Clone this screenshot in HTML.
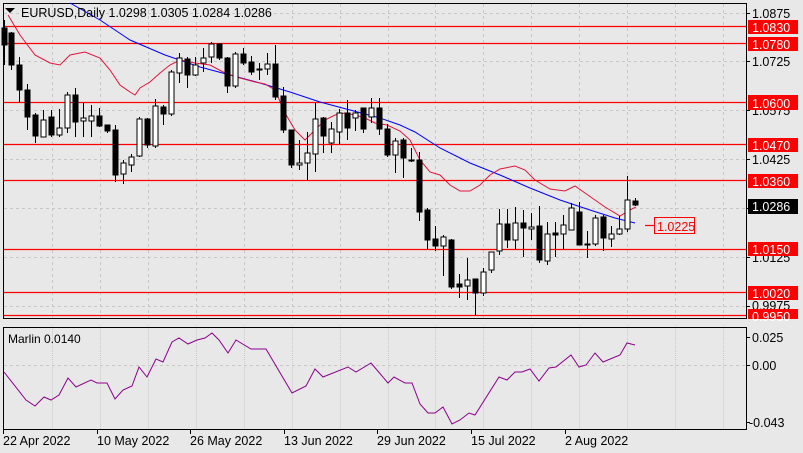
<!DOCTYPE html><html><head><style>body{margin:0;background:#e8e8e8;width:803px;height:453px;overflow:hidden}svg{display:block;font-family:"Liberation Sans",sans-serif}</style></head><body>
<svg width="803" height="453" viewBox="0 0 803 453">
<rect width="803" height="453" fill="#e8e8e8"/>
<g stroke="#c8c8c8" stroke-dasharray="3,3" stroke-width="1">
<line x1="4" x2="746" y1="13.5" y2="13.5"/><line x1="4" x2="746" y1="61.5" y2="61.5"/><line x1="4" x2="746" y1="110.5" y2="110.5"/><line x1="4" x2="746" y1="159.5" y2="159.5"/><line x1="4" x2="746" y1="208.5" y2="208.5"/><line x1="4" x2="746" y1="257.5" y2="257.5"/><line x1="4" x2="746" y1="306.5" y2="306.5"/>
<line x1="4" x2="746" y1="365.5" y2="365.5"/>
<g id="vg"><line x1="52.5" x2="52.5" y1="4" y2="318"/><line x1="100.5" x2="100.5" y1="4" y2="318"/><line x1="148.5" x2="148.5" y1="4" y2="318"/><line x1="196.5" x2="196.5" y1="4" y2="318"/><line x1="244.5" x2="244.5" y1="4" y2="318"/><line x1="292.5" x2="292.5" y1="4" y2="318"/><line x1="340.5" x2="340.5" y1="4" y2="318"/><line x1="388.5" x2="388.5" y1="4" y2="318"/><line x1="435.5" x2="435.5" y1="4" y2="318"/><line x1="483.5" x2="483.5" y1="4" y2="318"/><line x1="531.5" x2="531.5" y1="4" y2="318"/><line x1="579.5" x2="579.5" y1="4" y2="318"/><line x1="627.5" x2="627.5" y1="4" y2="318"/><line x1="675.5" x2="675.5" y1="4" y2="318"/><line x1="723.5" x2="723.5" y1="4" y2="318"/></g>
<use href="#vg" transform="translate(0,324) scale(1,0.33)"/>
</g>
<g stroke="#000" fill="none" stroke-width="1">
<rect x="3.5" y="3.5" width="743" height="315"/>
<rect x="3.5" y="327.5" width="743" height="102"/>
</g>
<g stroke="#f00" stroke-width="1.2">
<line x1="4" x2="746" y1="26.5" y2="26.5"/><line x1="4" x2="746" y1="43.5" y2="43.5"/><line x1="4" x2="746" y1="102.5" y2="102.5"/><line x1="4" x2="746" y1="144.5" y2="144.5"/><line x1="4" x2="746" y1="180.5" y2="180.5"/><line x1="4" x2="746" y1="249.5" y2="249.5"/><line x1="4" x2="746" y1="292.5" y2="292.5"/><line x1="4" x2="746" y1="315.5" y2="315.5"/>
<line x1="645" x2="654" y1="225.5" y2="225.5"/>
</g>
<polyline fill="none" stroke="#00f" stroke-width="1" points="70,3 100,20 130,40 165,55 200,67 230,75 260,83 290,92 320,102 350,110 380,118 400,125 415,132 440,148 470,163 500,175 530,188 560,200 590,210 615,218 635,223"/>
<polyline fill="none" stroke="#e0143c" stroke-width="1" points="8,15 20,35 35,55 50,63 60,65 70,55 85,52 100,58 110,70 120,85 130,92 135,95 140,88 150,82 160,73 170,65 180,60 195,63 210,65 225,73 240,78 255,82 265,84 275,90 285,113 295,130 305,140 315,130 325,120 335,115 345,113 355,115 365,118 375,123 387,125 400,131 410,140 420,160 430,172 440,175 450,185 460,191 470,191 480,185 490,175 500,169 515,166 525,170 535,180 550,189 565,191 575,186 585,193 595,200 605,207 620,216 630,210 636,207"/>
<g stroke="#000" stroke-width="1">
<path d="M4.5 20V65M11.5 32V70M19.5 57V103M27.5 84V130M35.5 113V143M43.5 110V137M51.5 110V137M59.5 109V137M67.5 92V133M75.5 88V137M83.5 103V137M91.5 105V137M99.5 108V127M107.5 125V133M115.5 125V182M123.5 160V184M131.5 154V172M139.5 117V157M147.5 118V148M155.5 99V148M163.5 105V125M171.5 70V116M179.5 53V83M187.5 57V88M195.5 57V76M203.5 48V72M211.5 42V63M219.5 43V60M227.5 57V93M235.5 52V88M243.5 48V65M251.5 56V75M259.5 63V80M267.5 53V75M275.5 45V100M283.5 87V133M291.5 136V168M299.5 140V170M307.5 132V180M315.5 102V172M323.5 117V153M331.5 122V153M339.5 109V145M347.5 100V140M355.5 110V131M363.5 108V133M371.5 98V123M379.5 98V135M387.5 124V157M395.5 138V173M403.5 138V178M411.5 148V162M419.5 152V221M427.5 208V250M435.5 226V251M443.5 235V276M451.5 239V289M459.5 274V298M467.5 258V300M475.5 279V315M483.5 268V296M491.5 252V273M499.5 209V255M507.5 209V248M515.5 207V249M523.5 210V257M531.5 213V240M539.5 206V263M547.5 222V265M555.5 222V257M563.5 215V249M571.5 203V230M579.5 202V244M587.5 231V258M595.5 215V246M603.5 215V251M611.5 226V247M619.5 216V235M627.5 176V232M635.5 198V206"/>
</g>
<g stroke="#000" stroke-width="1">
<g fill="#000"><rect x="2" y="28" width="5" height="17"/><rect x="9" y="33" width="5" height="32"/><rect x="17" y="65" width="5" height="25"/><rect x="25" y="90" width="5" height="27"/><rect x="33" y="115" width="5" height="21"/><rect x="49" y="117" width="5" height="18"/><rect x="73" y="95" width="5" height="27"/><rect x="97" y="116" width="5" height="10"/><rect x="105" y="125" width="5" height="6"/><rect x="113" y="130" width="5" height="45"/><rect x="145" y="119" width="5" height="26"/><rect x="161" y="107" width="5" height="7"/><rect x="185" y="59" width="5" height="16"/><rect x="217" y="44" width="5" height="14"/><rect x="225" y="58" width="5" height="28"/><rect x="241" y="54" width="5" height="9"/><rect x="249" y="62" width="5" height="10"/><rect x="257" y="69" width="5" height="1"/><rect x="273" y="64" width="5" height="33"/><rect x="281" y="96" width="5" height="34"/><rect x="289" y="130" width="5" height="35"/><rect x="321" y="118" width="5" height="18"/><rect x="345" y="113" width="5" height="15"/><rect x="361" y="108" width="5" height="21"/><rect x="377" y="108" width="5" height="21"/><rect x="385" y="129" width="5" height="26"/><rect x="401" y="140" width="5" height="18"/><rect x="409" y="160" width="5" height="1"/><rect x="417" y="160" width="5" height="52"/><rect x="425" y="210" width="5" height="30"/><rect x="433" y="239" width="5" height="7"/><rect x="449" y="240" width="5" height="47"/><rect x="457" y="284" width="5" height="3"/><rect x="473" y="279" width="5" height="14"/><rect x="505" y="224" width="5" height="16"/><rect x="521" y="223" width="5" height="5"/><rect x="537" y="226" width="5" height="34"/><rect x="553" y="233" width="5" height="2"/><rect x="577" y="212" width="5" height="33"/><rect x="585" y="244" width="5" height="1"/><rect x="601" y="217" width="5" height="21"/><rect x="633" y="201" width="5" height="4"/></g>
<g fill="#fff"><rect x="41" y="120" width="5" height="17"/><rect x="57" y="128" width="5" height="7"/><rect x="65" y="95" width="5" height="33"/><rect x="81" y="118" width="5" height="3"/><rect x="89" y="116" width="5" height="5"/><rect x="121" y="163" width="5" height="11"/><rect x="129" y="157" width="5" height="8"/><rect x="137" y="119" width="5" height="37"/><rect x="153" y="106" width="5" height="40"/><rect x="169" y="72" width="5" height="42"/><rect x="177" y="58" width="5" height="15"/><rect x="193" y="65" width="5" height="10"/><rect x="201" y="58" width="5" height="5"/><rect x="209" y="44" width="5" height="13"/><rect x="233" y="54" width="5" height="32"/><rect x="265" y="64" width="5" height="5"/><rect x="297" y="163" width="5" height="2"/><rect x="305" y="153" width="5" height="10"/><rect x="313" y="119" width="5" height="35"/><rect x="329" y="129" width="5" height="14"/><rect x="337" y="113" width="5" height="19"/><rect x="353" y="113" width="5" height="5"/><rect x="369" y="108" width="5" height="9"/><rect x="393" y="141" width="5" height="14"/><rect x="441" y="237" width="5" height="9"/><rect x="465" y="280" width="5" height="6"/><rect x="481" y="272" width="5" height="21"/><rect x="489" y="252" width="5" height="18"/><rect x="497" y="224" width="5" height="27"/><rect x="513" y="223" width="5" height="17"/><rect x="529" y="227" width="5" height="2"/><rect x="545" y="234" width="5" height="27"/><rect x="561" y="225" width="5" height="9"/><rect x="569" y="208" width="5" height="22"/><rect x="593" y="218" width="5" height="26"/><rect x="609" y="234" width="5" height="5"/><rect x="617" y="229" width="5" height="5"/><rect x="625" y="200" width="5" height="29"/></g>
</g>
<polyline fill="none" stroke="#8b008b" stroke-width="1" points="4,372 26,400 35,406 44,397 51,400 59,395 68,378 76,387 91,380 97,383 107,383 115,399 123,390 132,386 139,367 147,377 156,359 163,362 172,342 179,338 188,344 197,340 205,338 212,333 219,340 228,353 236,340 251,349 266,349 292,393 306,386 315,369 323,377 348,367 356,372 371,363 388,383 394,377 405,383 412,383 420,404 428,413 435,413 443,407 452,424 460,420 469,413 475,415 499,377 507,380 515,372 522,372 530,369 539,381 549,368 556,367 571,355 579,367 586,365 595,353 603,362 620,355 627,343 635,345"/>
<path d="M5 8L10 13L15 8Z" fill="#000"/>
<g font-size="12.5" fill="#000">
<text x="21" y="17">EURUSD,Daily  1.0298 1.0305 1.0284 1.0286</text>
<text x="8" y="343" font-size="12">Marlin 0.0140</text>
</g>
<g font-size="12.5" fill="#000">
<text x="752" y="18">1.0875</text><text x="752" y="66">1.0725</text><text x="752" y="115">1.0575</text><text x="752" y="164">1.0425</text><text x="752" y="262">1.0125</text><text x="752" y="310">0.9975</text>
<text x="752" y="342">0.025</text><text x="752" y="370">0.00</text><text x="749" y="427">-0.043</text>
</g>
<g stroke="#000"><path d="M746 13.5h4M746 61.5h4M746 110.5h4M746 159.5h4M746 208.5h4M746 257.5h4M746 306.5h4M746 337.5h4M746 365.5h4M746 422.5h4"/></g>
<g fill="#f00"><rect x="748" y="20" width="50" height="14"/><rect x="748" y="37" width="50" height="14"/><rect x="748" y="95" width="50" height="15"/><rect x="748" y="138" width="50" height="14"/><rect x="748" y="174" width="50" height="14"/><rect x="748" y="242" width="50" height="14"/><rect x="748" y="286" width="50" height="14"/><rect x="748" y="309" width="50" height="10"/></g>
<rect x="748" y="199" width="50" height="15" fill="#000"/>
<g font-size="12.5" fill="#fff">
<text x="752" y="32">1.0830</text><text x="752" y="49">1.0780</text><text x="752" y="108">1.0600</text><text x="752" y="150">1.0470</text><text x="752" y="186">1.0360</text><text x="752" y="211">1.0286</text><text x="752" y="254">1.0150</text><text x="752" y="298">1.0020</text><text x="752" y="321">0.9950</text>
</g>
<rect x="654.5" y="217.5" width="40" height="16" fill="none" stroke="#f00"/>
<text x="657" y="231" font-size="12.5" fill="#f00">1.0225</text>
<g font-size="12.5" fill="#000">
<text x="3" y="445">22 Apr 2022</text><text x="97" y="445">10 May 2022</text><text x="190" y="445">26 May 2022</text><text x="284" y="445">13 Jun 2022</text><text x="377" y="445">29 Jun 2022</text><text x="471" y="445">15 Jul 2022</text><text x="565" y="445">2 Aug 2022</text>
</g>
<g stroke="#000"><path d="M3.5 430v4M97.5 430v4M190.5 430v4M284.5 430v4M377.5 430v4M471.5 430v4M565.5 430v4"/></g>
</svg>
</body></html>
